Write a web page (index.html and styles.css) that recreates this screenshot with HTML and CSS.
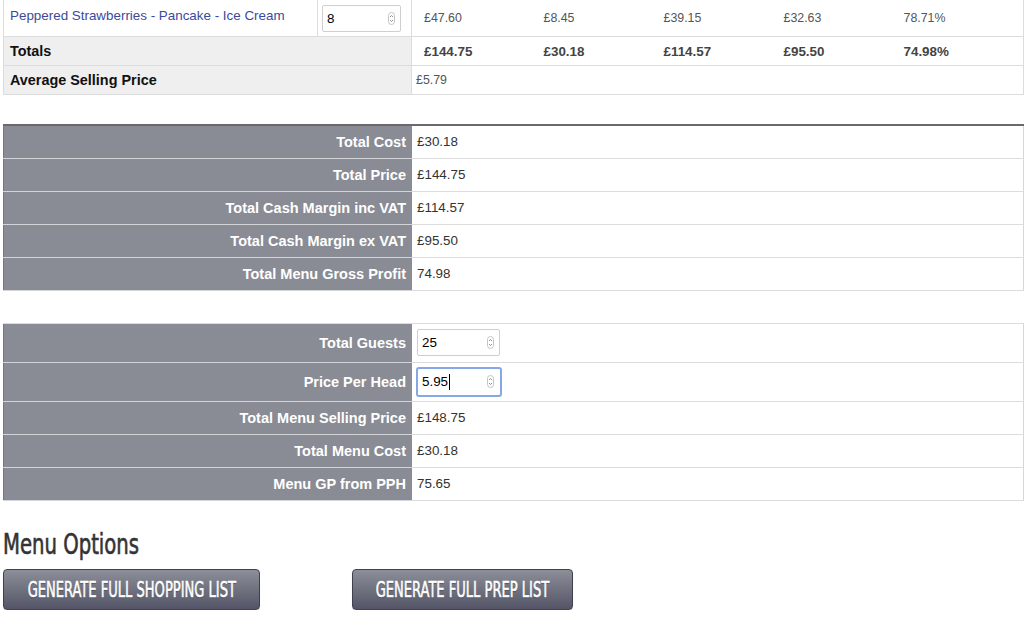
FILE: index.html
```html
<!doctype html>
<html>
<head>
<meta charset="utf-8">
<link rel="stylesheet" href="styles.css">
</head>
<body>
<div class="page">

<table class="items">
	<colgroup>
		<col style="width:314px">
		<col style="width:94px">
		<col style="width:120px">
		<col style="width:120px">
		<col style="width:120px">
		<col style="width:120px">
		<col>
	</colgroup>
	<tr class="item-row">
		<td class="dish"><a href="#">Peppered Strawberries - Pancake - Ice Cream</a></td>
		<td class="qty">
			<div class="numbox small"><input type="text" value="8"><svg class="spin" width="7" height="13" viewBox="0 0 7 13"><rect x="0.5" y="0.5" width="6" height="12" rx="3" fill="none" stroke="#c4c4c4"/><path d="M2 5 L3.5 3.5 L5 5 M2 8 L3.5 9.5 L5 8" fill="none" stroke="#777" stroke-width="0.8"/></svg></div>
		</td>
		<td class="num first">£47.60</td>
		<td class="num">£8.45</td>
		<td class="num">£39.15</td>
		<td class="num">£32.63</td>
		<td class="num last">78.71%</td>
	</tr>
	<tr class="totals">
		<th colspan="2">Totals</th>
		<td class="num first">£144.75</td>
		<td class="num">£30.18</td>
		<td class="num">£114.57</td>
		<td class="num">£95.50</td>
		<td class="num last">74.98%</td>
	</tr>
	<tr class="avg">
		<th colspan="2">Average Selling Price</th>
		<td colspan="5">£5.79</td>
	</tr>
</table>

<table class="summary costs">
	<tr><th>Total Cost</th><td>£30.18</td></tr>
	<tr><th>Total Price</th><td>£144.75</td></tr>
	<tr><th>Total Cash Margin inc VAT</th><td>£114.57</td></tr>
	<tr><th>Total Cash Margin ex VAT</th><td>£95.50</td></tr>
	<tr><th>Total Menu Gross Profit</th><td>74.98</td></tr>
</table>

<table class="summary pph">
	<tr class="input-row"><th>Total Guests</th><td>
		<div class="numbox"><input type="text" value="25"><svg class="spin" width="7" height="13" viewBox="0 0 7 13"><rect x="0.5" y="0.5" width="6" height="12" rx="3" fill="none" stroke="#c4c4c4"/><path d="M2 5 L3.5 3.5 L5 5 M2 8 L3.5 9.5 L5 8" fill="none" stroke="#777" stroke-width="0.8"/></svg></div>
	</td></tr>
	<tr class="input-row"><th>Price Per Head</th><td>
		<div class="numbox focused"><span class="val">5.95<i class="caret"></i></span><svg class="spin" width="7" height="13" viewBox="0 0 7 13"><rect x="0.5" y="0.5" width="6" height="12" rx="3" fill="none" stroke="#c4c4c4"/><path d="M2 5 L3.5 3.5 L5 5 M2 8 L3.5 9.5 L5 8" fill="none" stroke="#777" stroke-width="0.8"/></svg></div>
	</td></tr>
	<tr><th>Total Menu Selling Price</th><td>£148.75</td></tr>
	<tr><th>Total Menu Cost</th><td>£30.18</td></tr>
	<tr><th>Menu GP from PPH</th><td>75.65</td></tr>
</table>

<h2 class="section-title"><span>Menu Options</span></h2>
<div class="actions">
	<button class="btn shopping"><span>Generate Full Shopping List</span></button>
	<button class="btn prep"><span>Generate Full Prep List</span></button>
</div>

</div>
</body>
</html>
```

FILE: styles.css
```css
html{
	height:100%;
}
body{
	margin:0px;
	background:#fff;
	color:#333;
	font-family:"Liberation Sans", Arial, sans-serif;
	font-size:13.4px;
}
.page{
	padding-left:3px;
}
table{
	border-collapse:collapse;
	table-layout:fixed;
	width:1021px;
}

/* dishes */
.items{
	margin-top:-1px;
}
.items td, .items th{
	border:1px solid #dcdcdc;
	padding:0px;
	vertical-align:middle;
	text-align:left;
}
.items td.num{
	border-left:0px;
	border-right:0px;
}
.items td.num.first{
	border-left:1px solid #dcdcdc;
}
.items td.num.last{
	border-right:1px solid #dcdcdc;
}
.item-row td.qty{
	height:36px;
	padding-left:4px;
}
.item-row td.dish{
	vertical-align:top;
	padding:8px 0px 0px 6px;
}
.dish a{
	color:#3b4a9c;
	text-decoration:none;
	font-size:13.4px;
}
.items td.num{
	padding-left:12px;
	font-size:12.4px;
	color:#555;
}
.totals th, .avg th{
	background:#efefef;
	color:#111;
	font-size:14.4px;
	font-weight:bold;
	padding-left:6px;
	height:28px;
}
.totals td.num{
	font-size:13.4px;
	font-weight:bold;
	color:#444;
}
.avg td{
	padding-left:4px !important;
	font-size:12.4px;
	color:#555;
}

/* number boxes */
.numbox{
	display:flex;
	align-items:center;
	justify-content:space-between;
	box-sizing:border-box;
	width:83px;
	height:27px;
	border:1px solid #cfcfcf;
	border-radius:2px;
	background:#fff;
	padding:0px 5px 0px 4px;
}
.numbox.small{
	width:79px;
}
.numbox input{
	border:0px;
	outline:none;
	padding:0px;
	width:50px;
	font-family:"Liberation Sans", Arial, sans-serif;
	font-size:13.4px;
	color:#000;
	background:transparent;
}
.numbox.focused{
	width:86px;
	height:30px;
	margin-left:-1px;
	border:2px solid #86a8e8;
	border-radius:3px;
	padding-left:4px;
	padding-right:6px;
}
.numbox .val{
	font-size:13.4px;
	color:#000;
	display:flex;
	align-items:center;
}
.caret{
	display:inline-block;
	width:1px;
	height:16px;
	background:#000;
	margin-left:1px;
}

/* summary tables */
.summary{
	border-left:1px solid #777;
	border-right:1px solid #d6d6d6;
}
.summary th{
	width:402px;
	background:#898c94;
	color:#fff;
	font-size:14.5px;
	font-weight:bold;
	text-align:right;
	padding:0px 6px 0px 0px;
	border-bottom:1px solid #d4d5d8;
}
.summary td{
	padding-left:5px;
	font-size:13.4px;
	color:#333;
	border-bottom:1px solid #dcdcdc;
}
.summary tr{
	height:33px;
}
.costs{
	margin-top:29px;
	border-top:2px solid #6a6a6a;
}
.pph{
	margin-top:32px;
	border-top:1px solid #dcdcdc;
}
.pph tr.input-row{
	height:39px;
}

/* menu options */
.section-title{
	margin:26px 0px 0px 0px;
	font-family:"Liberation Sans Narrow", "DejaVu Sans Condensed", sans-serif;
	font-weight:normal;
	font-size:28px;
	color:#333;
	line-height:36px;
}
.section-title span{
	display:inline-block;
	transform:scaleX(0.78);
	transform-origin:left center;
	-webkit-text-stroke:0.6px #333;
}
.actions{
	display:flex;
	margin-top:6px;
}
.btn{
	display:flex;
	align-items:center;
	justify-content:center;
	overflow:visible;
	height:41px;
	border:1px solid #3f4152;
	border-radius:4px;
	background:linear-gradient(#8c8e98, #535567);
	color:#fff;
	padding:0px;
	box-shadow:0px 1px 1px rgba(0,0,0,0.15);
}
.btn span{
	display:inline-block;
	white-space:nowrap;
	text-transform:uppercase;
	font-family:"Liberation Sans Narrow", "DejaVu Sans Condensed", sans-serif;
	font-size:22px;
	text-shadow:0px 1px 1px rgba(0,0,0,0.3);
	-webkit-text-stroke:0.6px #fff;
	transform:scaleX(0.66);
}
.shopping{
	width:257px;
	margin-right:92px;
}
.prep{
	width:221px;
}
```
